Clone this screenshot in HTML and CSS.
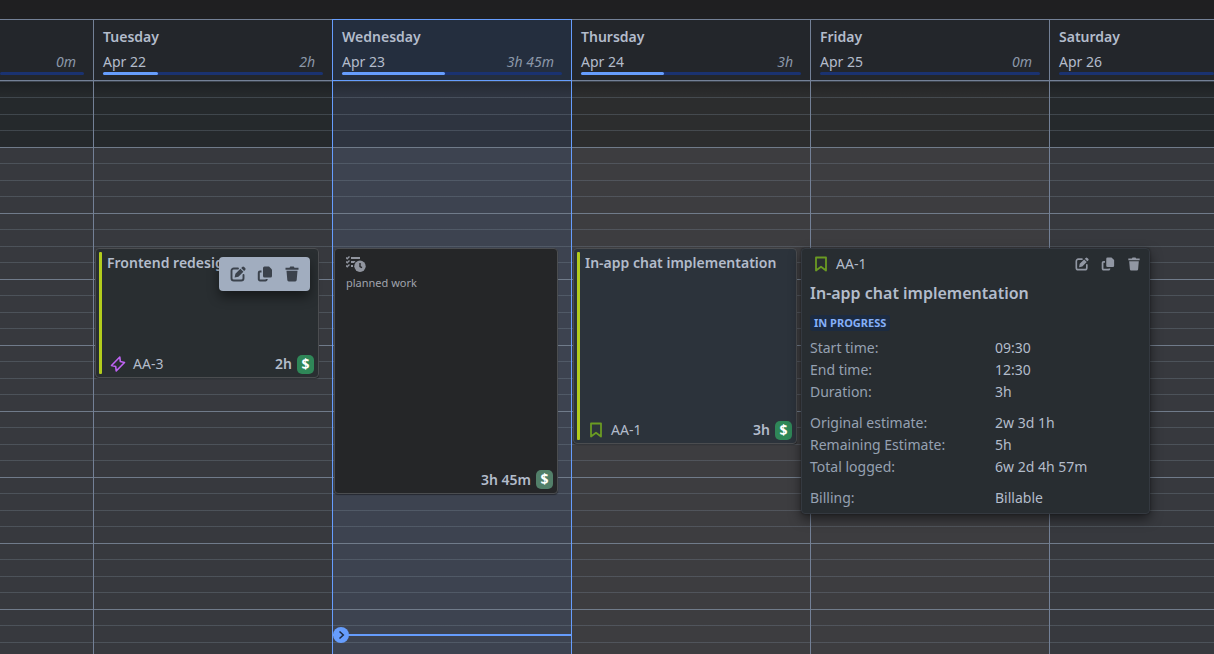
FILE: index.html
```
<!DOCTYPE html>
<html lang="en">
    <head>
        <meta charset="UTF-8" />
        <meta name="viewport" content="width=device-width, initial-scale=1.0" />
        <title>Timesheet - Week</title>
        <link rel="stylesheet" href="styles.css">
    </head>
    <body>
        <svg class="sprite" aria-hidden="true">
            <symbol id="icon-edit" viewBox="0 0 16 16">
                <path d="M8 2.500H3.800A2.300 2.300 0 0 0 1.500 4.800v7.400a2.300 2.300 0 0 0 2.300 2.300h7.400a2.300 2.300 0 0 0 2.300-2.300V9" fill="none" stroke="currentColor" stroke-width="1.900" stroke-linecap="round" />
                <path d="M4.600 11.600l.8-3.800 5-5 3 3-5 5z M11.200 2l1-1a1.300 1.300 0 0 1 1.900 0l1 1a1.300 1.300 0 0 1 0 1.900l-1 1z" fill="currentColor" />
            </symbol>
            <symbol id="icon-copy" viewBox="0 0 16 16">
                <path d="M7.500.5H12l3 3v6.500a1.500 1.500 0 0 1-1.500 1.500h-6A1.500 1.500 0 0 1 6 10V2A1.500 1.500 0 0 1 7.500.5z" fill="currentColor" />
                <path d="M4.500 5.500H3A1.200 1.200 0 0 0 1.800 6.700v6.500A1.200 1.200 0 0 0 3 14.400h5.500a1.200 1.200 0 0 0 1.200-1.200V13" fill="none" stroke="currentColor" stroke-width="2" />
            </symbol>
            <symbol id="icon-trash" viewBox="0 0 16 16">
                <path d="M1.500 1.800h4L6.300.6h3.400l.8 1.200h4v2h-13z M2.500 4.800h11l-.8 9.300a1.500 1.500 0 0 1-1.500 1.400H4.800a1.500 1.500 0 0 1-1.500-1.400z" fill="currentColor" />
            </symbol>
            <symbol id="icon-story" viewBox="0 0 16 16">
                <path d="M3 1.500h10v13L8 10.700l-5 3.800z" fill="none" stroke="currentColor" stroke-width="1.800" stroke-linejoin="round" />
            </symbol>
            <symbol id="icon-epic" viewBox="0 0 16 16">
                <path d="M9.800 1L1.500 9.500l4.200 1.100L6.200 15l8.300-8.500-4.200-1.100z" fill="none" stroke="currentColor" stroke-width="1.600" stroke-linejoin="round" />
            </symbol>
            <symbol id="icon-plan" viewBox="0 0 20 16">
                <path d="M0 1.500l1.200 1.200L3.500.5M0 5.500l1.200 1.200L3.500 4.500M0 9.500l1.200 1.200L3.500 8.500" fill="none" stroke="currentColor" stroke-width="1.400" />
                <path d="M5 1h9v2H5z M5 5h4.500L8 7H5z M5 9h2v2H5z" fill="currentColor" />
                <path d="M14 4.500a5.700 5.700 0 1 0 0 11.400 5.700 5.700 0 0 0 0-11.400z" fill="currentColor" />
                <path d="M14 7v3.500l2 1.200" fill="none" stroke="#252628" stroke-width="1.400" />
            </symbol>
        </svg>

        <div class="toolbar"></div>

        <main class="week">
            <section class="day weekday-start">
                <header class="day-head">
                    <h2>&nbsp;</h2>
                    <div class="day-info"><span></span><em>0m</em></div>
                    <div class="track"></div>
                </header>
                <div class="slots"></div>
            </section>

            <section class="day">
                <header class="day-head">
                    <h2>Tuesday</h2>
                    <div class="day-info"><span>Apr 22</span><em>2h</em></div>
                    <div class="track"><div class="fill" style="width: 25%"></div></div>
                </header>
                <div class="slots">
                    <article class="event marked" style="--quarters: 8">
                        <h3>Frontend redesign</h3>
                        <footer>
                            <svg class="type epic"><use href="#icon-epic" /></svg>
                            <span class="key">AA-3</span>
                            <strong>2h</strong>
                            <span class="billable">$</span>
                        </footer>
                        <div class="event-tools">
                            <button aria-label="Edit"><svg><use href="#icon-edit" /></svg></button>
                            <button aria-label="Copy"><svg><use href="#icon-copy" /></svg></button>
                            <button aria-label="Delete"><svg><use href="#icon-trash" /></svg></button>
                        </div>
                    </article>
                </div>
            </section>

            <section class="day today">
                <header class="day-head">
                    <h2>Wednesday</h2>
                    <div class="day-info"><span>Apr 23</span><em>3h 45m</em></div>
                    <div class="track"><div class="fill" style="width: 47%"></div></div>
                </header>
                <div class="slots">
                    <article class="event planned" style="--quarters: 15">
                        <svg class="plan-icon"><use href="#icon-plan" /></svg>
                        <p>planned work</p>
                        <footer>
                            <strong>3h 45m</strong>
                            <span class="billable">$</span>
                        </footer>
                    </article>
                    <div class="now">
                        <svg viewBox="0 0 16 16"><circle cx="8" cy="8" r="8" fill="#669dfd" /><path d="M6.500 4.500L10.300 8l-3.800 3.500" fill="none" stroke="#1d2a40" stroke-width="1.500" /></svg>
                    </div>
                </div>
            </section>

            <section class="day neutral">
                <header class="day-head">
                    <h2>Thursday</h2>
                    <div class="day-info"><span>Apr 24</span><em>3h</em></div>
                    <div class="track"><div class="fill" style="width: 37.5%"></div></div>
                </header>
                <div class="slots">
                    <article class="event marked selected" style="--quarters: 12">
                        <h3>In-app chat implementation</h3>
                        <footer>
                            <svg class="type story"><use href="#icon-story" /></svg>
                            <span class="key">AA-1</span>
                            <strong>3h</strong>
                            <span class="billable">$</span>
                        </footer>
                        <aside class="details">
                            <div class="details-head">
                                <svg class="type story"><use href="#icon-story" /></svg>
                                <span class="key">AA-1</span>
                                <button aria-label="Edit"><svg><use href="#icon-edit" /></svg></button>
                                <button aria-label="Copy"><svg><use href="#icon-copy" /></svg></button>
                                <button aria-label="Delete"><svg><use href="#icon-trash" /></svg></button>
                            </div>
                            <h4>In-app chat implementation</h4>
                            <span class="status">IN PROGRESS</span>
                            <dl>
                                <dt>Start time:</dt><dd>09:30</dd>
                                <dt>End time:</dt><dd>12:30</dd>
                                <dt>Duration:</dt><dd>3h</dd>
                            </dl>
                            <dl>
                                <dt>Original estimate:</dt><dd>2w 3d 1h</dd>
                                <dt>Remaining Estimate:</dt><dd>5h</dd>
                                <dt>Total logged:</dt><dd>6w 2d 4h 57m</dd>
                            </dl>
                            <dl>
                                <dt>Billing:</dt><dd>Billable</dd>
                            </dl>
                        </aside>
                    </article>
                </div>
            </section>

            <section class="day neutral">
                <header class="day-head">
                    <h2>Friday</h2>
                    <div class="day-info"><span>Apr 25</span><em>0m</em></div>
                    <div class="track"></div>
                </header>
                <div class="slots"></div>
            </section>

            <section class="day last">
                <header class="day-head">
                    <h2>Saturday</h2>
                    <div class="day-info"><span>Apr 26</span></div>
                    <div class="track"></div>
                </header>
                <div class="slots"></div>
            </section>
        </main>
    </body>
</html>
```
FILE: styles.css
```
* {
    box-sizing: border-box;
}

body {
    margin: 0;
    height: 100vh;
    display: flex;
    flex-direction: column;
    overflow: hidden;
    background-color: #1f1f21;
    color: #b3bccb;
    font-family: "Noto Sans", "Open Sans", sans-serif;
    font-size: 14px;
    line-height: 20px;
}

h2, h3, h4, p, dl, dd {
    margin: 0;
}

h2, h3, strong {
    font-size: 14px;
    font-weight: 600;
}

button {
    display: flex;
    padding: 0;
    border: none;
    background: none;
    color: inherit;
    cursor: pointer;
}

.sprite {
    display: none;
}

.toolbar {
    flex: none;
    height: 19px;
}

.week {
    flex: 1;
    min-height: 0;
    display: grid;
    grid-template-columns: minmax(0, 94fr) repeat(4, minmax(0, 239fr)) minmax(0, 164fr);
    border-top: 1px solid #738096;
}

.day {
    --line: #738096;
    --off: #25292c;
    --work: #37393e;
    display: flex;
    flex-direction: column;
    border-right: 1px solid var(--line);
}

.day.neutral {
    --off: #2c2d2e;
    --work: #3d3d40;
}

.day.today {
    --line: #669dfd;
    --off: #2e3440;
    --work: #3d4350;
    position: relative;
    margin-left: -1px;
    margin-top: -1px;
    border-left: 1px solid var(--line);
    border-top: 1px solid var(--line);
}

.day.last {
    border-right: none;
}

.day-head {
    flex: none;
    height: 61px;
    padding: 7px 9px 5px;
    background-color: #23262b;
    border-bottom: 1px solid var(--line);
}

.today .day-head {
    background-color: #242e3e;
}

.last .day-head {
    padding-right: 0;
}

.day-info {
    display: flex;
    justify-content: space-between;
    height: 20px;
    margin-top: 5px;
    padding-right: 8px;
}

.day-info em {
    color: #8c98a9;
}

.track {
    height: 3px;
    border-radius: 2px;
    background-color: #1a3270;
}

.weekday-start .track {
    margin-left: -9px;
}

.fill {
    height: 3px;
    border-radius: 2px;
    background-color: #669dfd;
}

/* one hour is 66px, split in quarters; the first hour is outside working time */
.slots {
    position: relative;
    flex: 1;
    min-height: 0;
    padding: 166px 13px 0 1px;
    border-top: 1px solid #3c434d;
    background-image:
        linear-gradient(rgba(0, 0, 0, 0.2), rgba(0, 0, 0, 0) 14px),
        linear-gradient(
            transparent 15px, rgba(135, 150, 165, 0.27) 15px, rgba(135, 150, 165, 0.27) 16px,
            transparent 16px, transparent 32px, rgba(135, 150, 165, 0.27) 32px, rgba(135, 150, 165, 0.27) 33px,
            transparent 33px, transparent 48px, rgba(135, 150, 165, 0.27) 48px, rgba(135, 150, 165, 0.27) 49px,
            transparent 49px, transparent 65px, #707b8a 65px),
        linear-gradient(var(--off) 66px, var(--work) 66px);
    background-size: 100% 100%, 100% 66px, 100% 100%;
    background-repeat: no-repeat, repeat-y, no-repeat;
}

.event {
    position: relative;
    display: flex;
    flex-direction: column;
    height: calc(var(--quarters) * 66px / 4 - 2px);
    padding: 4px 4px 3px 11px;
    border: 1px solid #4b4d50;
    border-radius: 4px;
    background-color: #292e31;
    box-shadow: 0 1px 1px rgba(0, 0, 0, 0.4);
}

.event.selected {
    background-color: #2c333b;
}

.event.planned {
    background-color: #252628;
}

/* project colour strip */
.marked::before {
    content: "";
    position: absolute;
    left: 3px;
    top: 3px;
    bottom: 3px;
    width: 3px;
    border-radius: 1px;
    background-color: #b2cc1d;
}

.event h3 {
    overflow: hidden;
    white-space: nowrap;
}

.event footer {
    display: flex;
    align-items: center;
    margin-top: auto;
}

.event strong {
    margin-left: auto;
}

.type {
    flex: none;
    width: 16px;
    height: 16px;
    margin-left: 3px;
}

.type.epic {
    color: #bf63f3;
}

.type.story {
    color: #6a9a23;
}

.key {
    margin-left: 7px;
}

.billable {
    width: 17px;
    height: 19px;
    margin-left: 5px;
    border-radius: 5px;
    background-color: #2f8758;
    color: #fff;
    font-weight: 700;
    line-height: 18px;
    text-align: center;
}

.planned .billable {
    background-color: #527f69;
}

.plan-icon {
    flex: none;
    width: 20px;
    height: 16px;
    margin-top: 3px;
    color: #91959f;
}

.planned p {
    margin-top: 1px;
    color: #a0a4ad;
    font-size: 11px;
}

.event-tools {
    position: absolute;
    top: 8px;
    right: 8px;
    display: flex;
    align-items: center;
    justify-content: space-around;
    width: 91px;
    height: 34px;
    padding: 0 5px;
    border-radius: 4px;
    background-color: #a1adbf;
    color: #3b424c;
    box-shadow: 0 6px 12px rgba(0, 0, 0, 0.45);
}

.event-tools svg {
    width: 16px;
    height: 16px;
}

/* current time */
.now {
    position: absolute;
    top: 552px;
    left: 0;
    right: 0;
    height: 2px;
    background-color: #669dfd;
}

.now svg {
    position: absolute;
    top: -7px;
    left: 0;
    width: 16px;
    height: 16px;
}

.details {
    position: absolute;
    z-index: 2;
    top: -1px;
    left: calc(100% + 5px);
    width: 349px;
    padding: 5px 8px 4px;
    border: 1px solid #343940;
    border-radius: 4px;
    background-color: #282d31;
    box-shadow: 0 5px 12px rgba(0, 0, 0, 0.5), 0 0 2px rgba(0, 0, 0, 0.4);
}

.details-head {
    display: flex;
    align-items: center;
    gap: 12px;
}

.details-head .key {
    margin-left: -5px;
    margin-right: auto;
}

.details-head button {
    color: #9197a3;
}

.details-head button svg {
    width: 14px;
    height: 14px;
}

.details h4 {
    margin-top: 6px;
    font-size: 16px;
    font-weight: 600;
    line-height: 26px;
}

.status {
    display: block;
    width: fit-content;
    margin: 9px 0 6px;
    padding: 0 4px;
    border-radius: 3px;
    background-color: #1c2b41;
    color: #85b0f9;
    font-size: 11px;
    font-weight: 700;
    line-height: 16px;
}

.details dl {
    display: grid;
    grid-template-columns: 185px 1fr;
    line-height: 22px;
}

.details dl + dl {
    margin-top: 9px;
}

.details dt {
    color: #96a1b1;
}
```
